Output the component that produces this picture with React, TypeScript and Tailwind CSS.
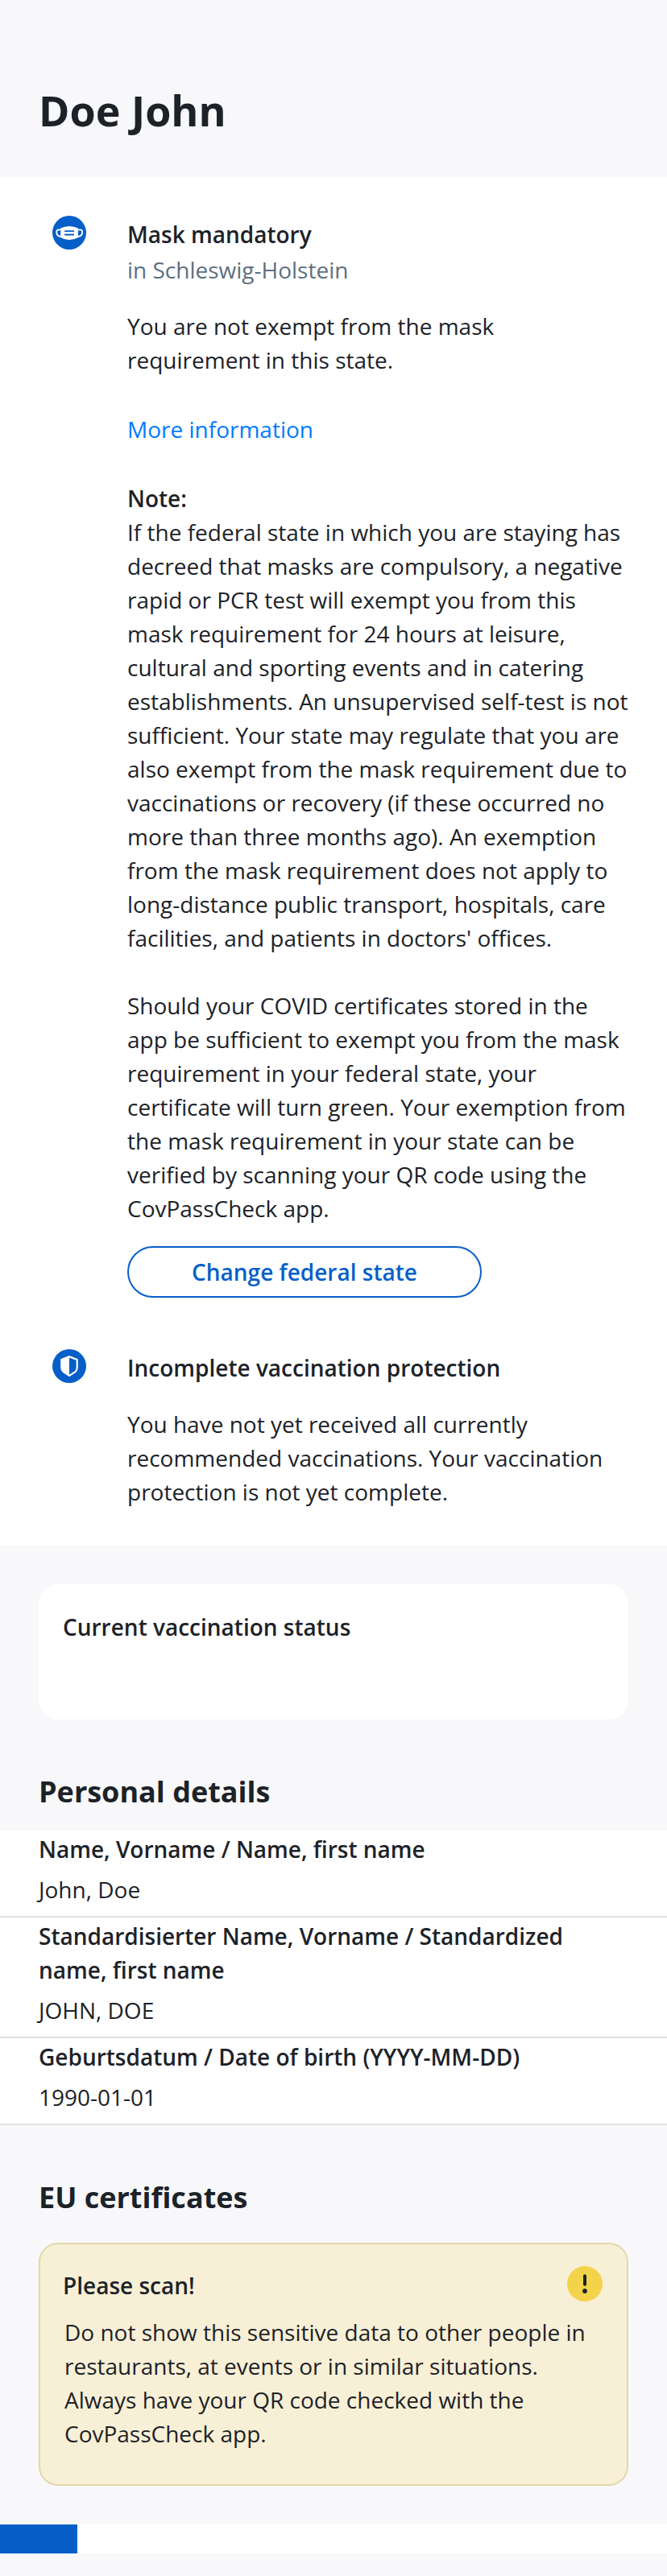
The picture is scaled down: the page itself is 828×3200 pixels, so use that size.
import type { ReactNode } from "react";

function MaskIcon() {
  return (
    <svg viewBox="0 0 42 42" className="block size-[42px]" aria-hidden="true">
      <circle cx="21" cy="21" r="21" fill="#065fc8" />
      <path
        d="M11 17.4 H8 Q5.2 17.4 5.2 20 Q5.2 25.4 10.6 26 M31 17.4 H34.4 Q37.2 17.4 37.2 20 Q37.2 25.4 31.8 26"
        fill="none"
        stroke="#fff"
        strokeWidth="1.8"
      />
      <path
        d="M10.2 15.6 Q15 13 21 13 Q27 13 32 15.6 V27 Q27 30 21 30 Q15 30 10.2 27 Z"
        fill="#fff"
      />
      <path d="M15.1 19.1 H27 M15.1 23.5 H27" stroke="#065fc8" strokeWidth="1.9" />
    </svg>
  );
}

function ShieldIcon() {
  return (
    <svg viewBox="0 0 42 42" className="block size-[42px]" aria-hidden="true">
      <circle cx="21" cy="21" r="21" fill="#065fc8" />
      <path
        d="M21 8 L31.8 12.2 V23 Q31.8 26.5 29 29 L21 34.3 L13 29 Q10.2 26.5 10.2 23 V12.2 Z"
        fill="#fff"
      />
      <path d="M21 10.4 L29.6 13.8 V23 Q29.6 25.8 27.4 27.6 L21 31.8 Z" fill="#065fc8" />
    </svg>
  );
}

function WarningIcon() {
  return (
    <svg viewBox="0 0 44 44" className="block size-11" aria-hidden="true">
      <circle cx="22" cy="22" r="22" fill="#f3d34a" />
      <path d="M22 12.2 V22.8" stroke="#1c2228" strokeWidth="4" strokeLinecap="round" />
      <circle cx="22" cy="31" r="2.9" fill="#1c2228" />
    </svg>
  );
}

function StatusRow({ icon, children }: { icon: ReactNode; children: ReactNode }) {
  return (
    <section className="flex pr-12 pl-[65px]">
      <div className="w-[93px] shrink-0">{icon}</div>
      <div className="min-w-0 flex-1 pt-0.5">{children}</div>
    </section>
  );
}

const details = [
  { label: "Name, Vorname / Name, first name", value: "John, Doe" },
  { label: "Standardisierter Name, Vorname / Standardized name, first name", value: "JOHN, DOE" },
  { label: "Geburtsdatum / Date of birth (YYYY-MM-DD)", value: "1990-01-01" },
];

export default function App() {
  return (
    <div className="flex h-[3200px] w-[828px] flex-col overflow-hidden bg-[#f8f8fa] font-['Open_Sans',sans-serif] text-[28px] leading-[42px] text-[#1c2228]">
      <header className="h-[220px] shrink-0 px-12 pt-[101px]">
        <h1 className="text-[52px] leading-[72px] font-bold">Doe John</h1>
      </header>

      <main className="shrink-0">
        <div className="h-[1700px] bg-white pt-12">
          <StatusRow icon={<MaskIcon />}>
            <h2 className="font-semibold">Mask mandatory</h2>
            <p className="mt-0.5 text-[#5d7080]">in Schleswig-Holstein</p>
            <p className="mt-7">You are not exempt from the mask requirement in this state.</p>
            <a className="mt-11 block text-[#007aff]">More information</a>
            <h3 className="mt-11 font-semibold">Note:</h3>
            <p>
              If the federal state in which you are staying has decreed that masks are compulsory, a
              negative rapid or PCR test will exempt you from this mask requirement for 24 hours at
              leisure, cultural and sporting events and in catering establishments. An unsupervised
              self-test is not sufficient. Your state may regulate that you are also exempt from the
              mask requirement due to vaccinations or recovery (if these occurred no more than three
              months ago). An exemption from the mask requirement does not apply to long-distance
              public transport, hospitals, care facilities, and patients in doctors' offices.
            </p>
            <p className="mt-[42px]">
              Should your COVID certificates stored in the app be sufficient to exempt you from the
              mask requirement in your federal state, your certificate will turn green. Your
              exemption from the mask requirement in your state can be verified by scanning your QR
              code using the CovPassCheck app.
            </p>
            <button className="mt-[26px] flex h-16 w-[440px] items-center justify-center rounded-full border-2 border-[#065fc8] font-semibold text-[#065fc8]">
              Change federal state
            </button>
          </StatusRow>

          <div className="mt-16">
            <StatusRow icon={<ShieldIcon />}>
              <h2 className="font-semibold">Incomplete vaccination protection</h2>
              <p className="mt-7">
                You have not yet received all currently recommended vaccinations. Your vaccination
                protection is not yet complete.
              </p>
            </StatusRow>
          </div>
        </div>

        <div className="mx-12 mt-12 h-[168px] rounded-3xl bg-white px-[30px] pt-8">
          <h2 className="font-semibold">Current vaccination status</h2>
        </div>

        <h2 className="px-12 pt-[66px] pb-6 text-[36px] leading-[48px] font-bold">
          Personal details
        </h2>
        <dl className="bg-white">
          {details.map((item) => (
            <div key={item.label} className="border-b-2 border-[#e0e0e0] px-12 pt-0.5 pb-3">
              <dt className="font-semibold">{item.label}</dt>
              <dd className="mt-2">{item.value}</dd>
            </div>
          ))}
        </dl>

        <h2 className="px-12 pt-[66px] pb-8 text-[36px] leading-[48px] font-bold">
          EU certificates
        </h2>
        <div className="mx-12 h-[302px] rounded-3xl border-2 border-[#e3d8ac] bg-[#f8f0d6] pt-[27px] pr-[30px] pl-7">
          <div className="flex items-start justify-between">
            <h3 className="pt-[3px] font-semibold">Please scan!</h3>
            <WarningIcon />
          </div>
          <p className="mt-4 pl-0.5">
            Do not show this sensitive data to other people in restaurants, at events or in similar
            situations. Always have your QR code checked with the CovPassCheck app.
          </p>
        </div>

        <div className="mt-12 h-9 bg-white">
          <div className="h-full w-24 bg-[#065fc8]" />
        </div>
      </main>
    </div>
  );
}
